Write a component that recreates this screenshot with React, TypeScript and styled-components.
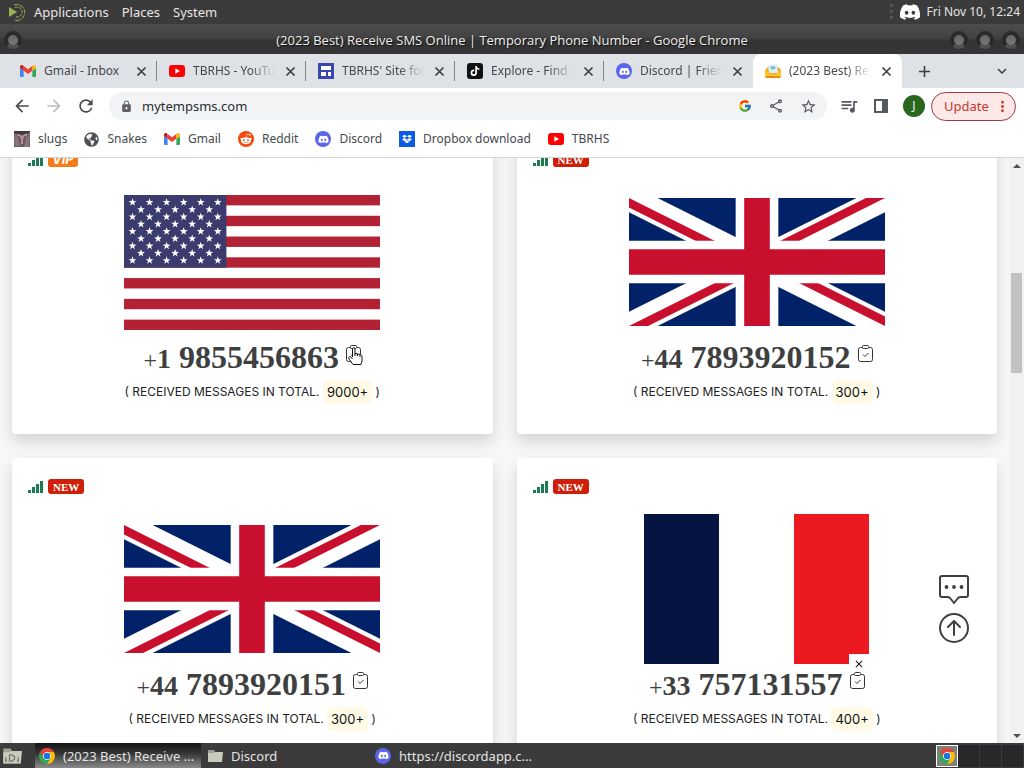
import React, { useId } from "react";
import styled, { createGlobalStyle, css } from "styled-components";
import {
  MdAdd, MdArrowBack, MdArrowForward, MdClose, MdExpandMore, MdLock, MdMoreVert,
  MdOutlineShare, MdQueueMusic, MdRefresh, MdStarBorder,
} from "react-icons/md";
import { FaDiscord, FaDropbox, FaGlobeAmericas, FaRedditAlien, FaTiktok } from "react-icons/fa";
import { FcGoogle } from "react-icons/fc";

const Global = createGlobalStyle`
  *, *::before, *::after { box-sizing: border-box; }
  body { margin: 0; background: #f8f8f8; }
  body, button, input { font-family: "Noto Sans", "Open Sans", sans-serif; font-size: 13px; }
  button { border: 0; padding: 0; background: none; color: inherit; }
  a { color: inherit; text-decoration: none; }
  svg { display: block; flex: none; }
`;

const Desktop = styled.div`
  display: flex;
  flex-direction: column;
  height: 100vh;
  overflow: hidden;
`;

/* ---------- desktop panel and window title ---------- */

const TopPanel = styled.header`
  display: flex;
  align-items: center;
  justify-content: space-between;
  height: 24px;
  padding: 0 4px 0 8px;
  background: #3c3b3c;
  color: #e6e6e4;
`;

const PanelGroup = styled.div<{ $gap: number }>`
  display: flex;
  align-items: center;
  gap: ${(p) => p.$gap}px;
`;

const MenuButton = styled.button`
  display: flex;
  align-items: center;
  gap: 7px;
  line-height: 24px;
`;

const Grip = styled.span`
  width: 3px;
  height: 16px;
  background: repeating-linear-gradient(#565556 0 3px, transparent 3px 6px);
`;

const Clock = styled.time`
  font-size: 12px;
  line-height: 24px;
`;

const TitleBar = styled.div`
  display: grid;
  grid-template-columns: 96px 1fr 96px;
  align-items: center;
  height: 30px;
  padding: 2px 4px 0;
  background: linear-gradient(#4c4c4c, #444 40%, #333 60%, #363636);
  color: #eee;
`;

const WindowTitle = styled.h1`
  margin: 0;
  font-family: "Open Sans", "Noto Sans", sans-serif;
  font-size: 13px;
  font-weight: 500;
  line-height: 28px;
  text-align: center;
  white-space: nowrap;
  text-shadow: 1px 1px 1px #111;
`;

const WindowButtons = styled.div<{ $end?: boolean }>`
  display: flex;
  gap: 8px;
  justify-content: ${(p) => (p.$end ? "flex-end" : "flex-start")};
`;

const WindowButton = styled.button`
  width: 18px;
  height: 18px;
  border: 4px solid #2a2a2a;
  border-bottom-color: #505050;
  border-radius: 50%;
  background: linear-gradient(#666, #777);
`;

/* ---------- browser chrome ---------- */

const TabStrip = styled.div`
  display: flex;
  align-items: stretch;
  height: 34px;
  padding: 0 8px;
  background: #dee1e6;
  color: #45494d;
`;

const Tab = styled.div<{ $active?: boolean; $divider?: boolean }>`
  display: flex;
  align-items: center;
  width: 149px;
  padding: 0 8px 0 12px;
  ${(p) =>
    p.$active &&
    css`
      background: #fff;
      border-radius: 8px 8px 0 0;
    `}
  ${(p) =>
    p.$divider &&
    css`
      background: linear-gradient(#808387, #808387) right 7px / 1px 20px no-repeat;
    `}
`;

const TabLabel = styled.span<{ $fade: boolean }>`
  flex: 1;
  min-width: 0;
  margin: 0 8px;
  overflow: hidden;
  font-size: 12px;
  white-space: nowrap;
  line-height: 20px;
  ${(p) => p.$fade && "mask-image: linear-gradient(to right, #000 70%, transparent);"}
`;

const IconButton = styled.button<{ $color?: string }>`
  display: flex;
  align-items: center;
  justify-content: center;
  color: ${(p) => p.$color ?? "#3c4043"};
`;

const NewTab = styled(IconButton)`
  width: 44px;
`;

const TabMenu = styled(IconButton)`
  margin-left: auto;
  width: 28px;
`;

const Toolbar = styled.div`
  display: flex;
  align-items: center;
  height: 36px;
  padding: 0 8px 0 12px;
  background: #fff;
`;

const NavButtons = styled.div`
  display: flex;
  gap: 12px;
  margin-right: 13px;
`;

const AddressBar = styled.label`
  display: flex;
  flex: 1;
  align-items: center;
  gap: 16px;
  height: 28px;
  padding: 0 10px 0 11px;
  border-radius: 14px;
  background: #f1f3f4;
  color: #5f6368;
`;

const AddressInput = styled.input`
  flex: 1;
  min-width: 0;
  margin-left: -7px;
  padding: 0;
  border: 0;
  outline: 0;
  background: none;
  color: #2b2d30;
  line-height: 20px;
`;

const ToolbarActions = styled.div`
  display: flex;
  align-items: center;
  gap: 15px;
  margin: 0 6px 0 12px;
`;

const Avatar = styled.button`
  width: 22px;
  height: 22px;
  border-radius: 50%;
  background: #2a661e;
  color: #e8f2e6;
  font-size: 12px;
  line-height: 22px;
`;

const UpdateButton = styled.button`
  display: flex;
  align-items: center;
  justify-content: space-between;
  width: 85px;
  height: 29px;
  padding: 0 4px 0 12px;
  border: 1px solid #9c3b48;
  border-radius: 15px;
  background: #fce8e6;
  color: #c5372f;
`;

const Bookmarks = styled.nav`
  display: flex;
  align-items: center;
  gap: 17px;
  height: 34px;
  padding: 0 14px 3px;
  border-bottom: 1px solid #d4d4d4;
  background: #fff;
  color: #45494d;
`;

const Bookmark = styled.a`
  display: flex;
  align-items: center;
  gap: 8px;
  font-size: 12px;
  line-height: 20px;
  white-space: nowrap;
`;

const Tile = styled.span<{ $bg: string; $round?: string }>`
  display: flex;
  flex: none;
  align-items: center;
  justify-content: center;
  width: 16px;
  height: 16px;
  border-radius: ${(p) => p.$round ?? "0"};
  background: ${(p) => p.$bg};
  color: #fff;
`;

/* ---------- page ---------- */

const PageArea = styled.div`
  position: relative;
  display: flex;
  flex: 1;
  min-height: 0;
`;

const Viewport = styled.main`
  flex: 1;
  min-width: 0;
  overflow: hidden;
`;

const CardGrid = styled.div`
  display: grid;
  grid-template-columns: 1fr 1fr;
  gap: 24px;
  margin-top: -27px;
  padding: 0 12px;
`;

const Card = styled.article`
  display: flex;
  flex-direction: column;
  align-items: center;
  height: 303px;
  padding: 20px 16px 0;
  border-radius: 4px;
  background: #fff;
  box-shadow: 0 8px 16px rgba(0, 0, 0, 0.15);
  color: #3e3f40;
`;

const BadgeRow = styled.div`
  display: flex;
  align-items: center;
  align-self: stretch;
  gap: 4px;
  height: 17px;
`;

const Badge = styled.span<{ $vip?: boolean }>`
  height: 15px;
  padding: 0 ${(p) => (p.$vip ? 4 : 5)}px;
  border-radius: 3px;
  background: ${(p) => (p.$vip ? "#f77a1b" : "#cf1f08")};
  color: #fff;
  font-family: ${(p) => (p.$vip ? '"Inter", sans-serif' : '"Liberation Serif", serif')};
  font-size: ${(p) => (p.$vip ? 13 : 11)}px;
  font-style: ${(p) => (p.$vip ? "italic" : "normal")};
  font-weight: 700;
  line-height: ${(p) => (p.$vip ? 14 : 16)}px;
`;

const FlagBox = styled.div`
  display: flex;
  align-items: center;
  height: 150px;
  margin-top: 19px;
`;

const Phone = styled.h2`
  display: flex;
  align-items: baseline;
  margin: 0;
  font-family: "Liberation Serif", serif;
  font-size: 32px;
  font-weight: 700;
  line-height: 40px;
  white-space: nowrap;
`;

const Prefix = styled.span`
  margin-right: 8px;
  font-size: 28px;
`;

const Plus = styled.span`
  font-size: 24px;
  font-weight: 400;
`;

const CopyButton = styled.button`
  position: relative;
  align-self: flex-start;
  margin: 8px 0 0 7px;
  color: #333;
`;

const Pointer = styled.svg`
  position: absolute;
  left: 2px;
  top: 2px;
`;

const Total = styled.p`
  display: flex;
  align-items: center;
  margin: 0;
  color: #222;
  font-family: "Inter", "Lato", sans-serif;
  font-size: 12px;
  line-height: 24px;
  white-space: pre;
`;

const Count = styled.span`
  padding: 0 4px;
  border-radius: 6px;
  background: #fefae6;
  color: #111;
  font-size: 13px;
`;

const Floating = styled.div`
  position: absolute;
  right: 55px;
  bottom: 100px;
  display: flex;
  flex-direction: column;
  gap: 8px;
  color: #333638;
`;

const AdClose = styled.button`
  position: absolute;
  right: 155px;
  bottom: 69px;
  display: flex;
  align-items: center;
  justify-content: center;
  width: 20px;
  height: 20px;
  background: linear-gradient(#fff, #fff) top / 100% 11px no-repeat;
  color: #111;
`;

const Scrollbar = styled.div`
  display: flex;
  flex-direction: column;
  align-items: center;
  width: 15px;
  padding: 6px 0 5px;
  background: #f1f1f1;
`;

const Thumb = styled.div`
  width: 11px;
  height: 17.5%;
  margin: 105px 0 auto;
  background: #c1c1c1;
`;

const Arrow = styled.span<{ $down?: boolean }>`
  border: 4px solid transparent;
  ${(p) => (p.$down ? "border-top-color: #505050; border-bottom: 0;" : "border-bottom-color: #505050; border-top: 0;")}
`;

/* ---------- taskbar ---------- */

const Taskbar = styled.footer`
  display: flex;
  align-items: center;
  height: 25px;
  padding-left: 2px;
  background: #3c3b3c;
  color: #e4e4e2;
`;

const Tasks = styled.div`
  display: flex;
  gap: 2px;
  margin-left: 13px;
`;

const Task = styled.button<{ $active?: boolean }>`
  display: flex;
  align-items: center;
  gap: 8px;
  width: 166px;
  height: 25px;
  padding: 0 4px;
  line-height: 24px;
  white-space: nowrap;
  ${(p) =>
    p.$active &&
    css`
      background: linear-gradient(#151516, #333 40%, #8a8a8b);
    `}
`;

const Workspaces = styled.div`
  display: flex;
  margin-left: auto;
`;

const Workspace = styled.button<{ $current?: boolean }>`
  display: flex;
  align-items: center;
  justify-content: center;
  width: 22px;
  height: 22px;
  border: ${(p) => (p.$current ? "1px solid #fff" : "0")};
  border-right: 1px solid ${(p) => (p.$current ? "#fff" : "#3a3a3c")};
  background: ${(p) => (p.$current ? "#7d827b" : "#28282a")};
`;

/* ---------- drawings ---------- */

const GmailIcon = () => (
  <svg width="16" height="16" viewBox="52 31 88 88" aria-hidden="true">
    <path fill="#4285f4" d="M58 108h14V74L52 59v43c0 3.32 2.69 6 6 6" />
    <path fill="#34a853" d="M120 108h14c3.32 0 6-2.69 6-6V59l-20 15" />
    <path fill="#fbbc04" d="M120 48v26l20-15v-8c0-7.42-8.47-11.65-14.4-7.2" />
    <path fill="#ea4335" d="M72 74V48l24 18 24-18v26L96 92" />
    <path fill="#c5221f" d="M52 51v8l20 15V48l-5.6-4.2c-5.94-4.45-14.4-.22-14.4 7.2" />
  </svg>
);

const ChromeIcon = () => (
  <svg width="16" height="16" viewBox="2 2 44 44" aria-hidden="true">
    <circle cx="24" cy="24" r="12" fill="#fff" />
    <path fill="#ea4335" d="M4.95 13A22 22 0 0 1 43.05 13H24A11 11 0 0 0 14.47 29.5Z" />
    <path fill="#fbbc04" d="M43.05 13A22 22 0 0 1 24 46L33.53 29.5A11 11 0 0 0 24 13Z" />
    <path fill="#34a853" d="M24 46A22 22 0 0 1 4.95 13L14.47 29.5A11 11 0 0 0 33.53 29.5Z" />
    <circle cx="24" cy="24" r="9" fill="#1a73e8" />
  </svg>
);

const CrossIcon = () => (
  <svg width="15" height="15" viewBox="0 0 15 15" aria-hidden="true">
    <path stroke="currentColor" strokeWidth="1.700" d="M3.500 3.500l8 8M11.500 3.500l-8 8" />
  </svg>
);

const YouTubeIcon = () => (
  <svg width="16" height="16" viewBox="0 0 16 16" aria-hidden="true">
    <rect y="2" width="16" height="12" rx="3" fill="#f00" />
    <path fill="#fff" d="M6.300 5.200v5.600L11 8z" />
  </svg>
);

const DiscordIcon = () => (
  <Tile $bg="#5b65ea" $round="50%"><FaDiscord size={11} /></Tile>
);

const SitesIcon = () => (
  <svg width="16" height="16" viewBox="0 0 16 16" aria-hidden="true">
    <path fill="#3949ab" d="M0 0h16v16H0z" />
    <path fill="#fff" d="M3 3h10v4H3zM3 9h5v4H3zM10 9h3v4h-3z" />
  </svg>
);

const MailboxIcon = () => (
  <svg width="16" height="16" viewBox="0 0 16 16" aria-hidden="true">
    <path fill="#f5a91c" d="M0 7l3-3h10l3 3v8H0z" />
    <path fill="#dff1f8" d="M3 2l9-1 1 9H4z" />
    <path fill="#74b9d5" d="M5 4l4-1 2 2-4 2z" />
    <path fill="#fec52e" d="M0 7l5 4h6l5-4v7a1 1 0 0 1-1 1H1a1 1 0 0 1-1-1z" />
    <path fill="#f28a12" d="M1 13h14v2H1z" />
  </svg>
);

const SlugIcon = () => (
  <svg width="16" height="16" viewBox="0 0 16 16" aria-hidden="true">
    <path fill="#6b5b60" d="M0 0h16v16H0z" />
    <path fill="#8b747b" d="M0 3l4 3 2 9H1zM16 2l-4 5-2 9h5z" />
    <path fill="none" stroke="#b8939d" strokeWidth="2" d="M3 4c3-1 4 1 5 4 1-3 2-5 5-4M8 8v5" />
    <path fill="#453a3f" d="M0 0h16v1L8 4 0 2z" />
  </svg>
);

const MateLogo = () => (
  <svg width="19" height="18" viewBox="0 0 19 18" aria-hidden="true">
    <path fill="#98b351" d="M1 4l8 5-8 5z" />
    <g fill="none" stroke="#98b351">
      <path d="M6 2a8 8 0 1 1 0 15" strokeDasharray="5 1" />
      <path d="M7 4.500a5 5 0 1 1 0 9" strokeDasharray="3 1" />
    </g>
  </svg>
);

const SidePanelIcon = () => (
  <svg width="14" height="14" viewBox="0 0 14 14" aria-hidden="true">
    <path fill="none" stroke="#55595e" strokeWidth="2" d="M1 1h12v12H1z" />
    <path fill="#55595e" d="M8 1h5v12H8z" />
  </svg>
);

const FolderIcon = ({ size = 16 }: { size?: number }) => (
  <svg width={size} height={size} viewBox="0 0 16 16" aria-hidden="true">
    <path fill="#9fa194" d="M1 2h6l1 2h7v10H1z" />
    <path fill="#c9cabc" d="M1 5h5l2-1h8l-1 10H1z" />
    {size > 16 && <path fill="none" stroke="#74766c" d="M6 7h2l2 1.500v2L8 12H6zM3 9v3h1M13 9v3h-1" />}
  </svg>
);

const Signal = () => (
  <svg width="16" height="12" viewBox="0 0 16 12" aria-hidden="true">
    <path fill="#1d7a52" d="M0 9h3v3H0zM4 6h3v6H4zM8 3h3v9H8zM12 0h3v12h-3z" />
  </svg>
);

const ClipboardIcon = () => (
  <svg width="15" height="17" viewBox="0 0 15 17" fill="none" stroke="currentColor" aria-hidden="true">
    <path d="M4 2.500H2.500a2 2 0 0 0-2 2v10a2 2 0 0 0 2 2h10a2 2 0 0 0 2-2v-10a2 2 0 0 0-2-2H11" />
    <rect x="4.500" y=".5" width="6" height="3" rx="1" />
    <path d="M5 9.500l2 2 3.500-3.500" />
  </svg>
);

const HandPointer = () => (
  <Pointer width="15" height="18" viewBox="0 0 15 18" aria-hidden="true">
    <path
      fill="#fff"
      stroke="#111"
      d="M4.500 10V2a1.200 1.200 0 0 1 2.500 0v4.500l5.500 1q1.500.5 1.500 2V14l-1 3.500H5L1 12q-1-2 .5-2.500 1.500 0 3 2.500"
    />
    <path stroke="#111" d="M7 6v3M9.500 7v2M12 8v2" />
  </Pointer>
);

const ChatIcon = () => (
  <svg width="30" height="30" viewBox="0 0 30 30" fill="none" stroke="currentColor" strokeWidth="2" aria-hidden="true">
    <path strokeLinejoin="round" d="M3 1h24a2 2 0 0 1 2 2v17a2 2 0 0 1-2 2h-5q-2 0-3 1l-4 5-4-5q-1-1-3-1H3a2 2 0 0 1-2-2V3a2 2 0 0 1 2-2z" />
    <g fill="currentColor" stroke="none">
      <circle cx="7.500" cy="12" r="1.900" />
      <circle cx="15" cy="12" r="1.900" />
      <circle cx="22.500" cy="12" r="1.900" />
    </g>
  </svg>
);

const UpIcon = () => (
  <svg width="30" height="30" viewBox="0 0 30 30" fill="none" stroke="currentColor" strokeWidth="2" strokeLinecap="round" strokeLinejoin="round" aria-hidden="true">
    <circle cx="15" cy="15" r="14" />
    <path d="M15 22V8M9 14l6-6 6 6" />
  </svg>
);

const starPoints = (cx: number, cy: number, r: number) =>
  Array.from({ length: 10 }, (_, i) => {
    const radius = i % 2 ? r * 0.4 : r;
    const angle = (Math.PI / 5) * i - Math.PI / 2;
    return `${(cx + radius * Math.cos(angle)).toFixed(2)},${(cy + radius * Math.sin(angle)).toFixed(2)}`;
  }).join(" ");

const FlagUS = () => (
  <svg width="256" height="135" viewBox="0 0 256 135" role="img" aria-label="United States" preserveAspectRatio="none">
    <path fill="#fff" d="M0 0h256v135H0z" />
    {Array.from({ length: 7 }, (_, i) => (
      <rect key={i} y={(i * 2 * 135) / 13} width="256" height={135 / 13} fill="#b22234" />
    ))}
    <rect width="102.4" height="72.7" fill="#3c3b6e" />
    {Array.from({ length: 9 }, (_, row) =>
      Array.from({ length: row % 2 ? 5 : 6 }, (_, col) => (
        <polygon
          key={`${row}-${col}`}
          fill="#fff"
          points={starPoints(8.5 + (row % 2 ? 8.5 : 0) + col * 17.06, 7.3 + row * 7.27, 4.1)}
        />
      ))
    )}
  </svg>
);

const FlagUK = () => {
  const clip = useId();
  return (
    <svg width="256" height="128" viewBox="0 0 60 30" role="img" aria-label="United Kingdom">
      <clipPath id={clip}>
        <path d="M30 15h30v15zv15h-30zh-30v-15zv-15h30z" />
      </clipPath>
      <path fill="#012169" d="M0 0h60v30H0z" />
      <path stroke="#fff" strokeWidth="6" d="M0 0l60 30m0-30L0 30" />
      <path stroke="#c8102e" strokeWidth="4" clipPath={`url(#${clip})`} d="M0 0l60 30m0-30L0 30" />
      <path stroke="#fff" strokeWidth="10" d="M30 0v30M0 15h60" />
      <path stroke="#c8102e" strokeWidth="6" d="M30 0v30M0 15h60" />
    </svg>
  );
};

const FlagFR = () => (
  <svg width="225" height="150" viewBox="0 0 3 2" role="img" aria-label="France">
    <path fill="#051440" d="M0 0h1v2H0z" />
    <path fill="#fff" d="M1 0h1v2H1z" />
    <path fill="#ec1920" d="M2 0h1v2H2z" />
  </svg>
);

/* ---------- data ---------- */

const tabs = [
  { icon: <GmailIcon />, label: "Gmail - Inbox" },
  { icon: <YouTubeIcon />, label: "TBRHS - YouTube" },
  { icon: <SitesIcon />, label: "TBRHS' Site for S" },
  { icon: <Tile $bg="#111" $round="3px"><FaTiktok size={10} /></Tile>, label: "Explore - Find y" },
  { icon: <DiscordIcon />, label: "Discord | Friends" },
  { icon: <MailboxIcon />, label: "(2023 Best) Rec" },
];

const bookmarks = [
  { icon: <SlugIcon />, label: "slugs" },
  { icon: <FaGlobeAmericas size={15} color="#4d5156" />, label: "Snakes" },
  { icon: <GmailIcon />, label: "Gmail" },
  { icon: <Tile $bg="#f4480f" $round="50%"><FaRedditAlien size={12} /></Tile>, label: "Reddit" },
  { icon: <DiscordIcon />, label: "Discord" },
  { icon: <Tile $bg="#0b5be8"><FaDropbox size={10} /></Tile>, label: "Dropbox download" },
  { icon: <YouTubeIcon />, label: "TBRHS" },
];

const numbers = [
  { badge: "VIP", flag: <FlagUS />, code: "1", number: "9855456863", total: "9000+", hover: true },
  { badge: "NEW", flag: <FlagUK />, code: "44", number: "7893920152", total: "300+" },
  { badge: "NEW", flag: <FlagUK />, code: "44", number: "7893920151", total: "300+" },
  { badge: "NEW", flag: <FlagFR />, code: "33", number: "757131557", total: "400+" },
];

export default function App() {
  return (
    <Desktop>
      <Global />
      <TopPanel>
        <PanelGroup $gap={13}>
          <MenuButton><MateLogo />Applications</MenuButton>
          <MenuButton>Places</MenuButton>
          <MenuButton>System</MenuButton>
        </PanelGroup>
        <PanelGroup $gap={6}>
          <Grip />
          <FaDiscord size={22} color="#fff" />
          <Clock>Fri Nov 10, 12:24</Clock>
        </PanelGroup>
      </TopPanel>

      <TitleBar>
        <WindowButtons><WindowButton aria-label="Window menu" /></WindowButtons>
        <WindowTitle>(2023 Best) Receive SMS Online | Temporary Phone Number - Google Chrome</WindowTitle>
        <WindowButtons $end>
          <WindowButton aria-label="Minimize" />
          <WindowButton aria-label="Maximize" />
          <WindowButton aria-label="Close" />
        </WindowButtons>
      </TitleBar>

      <TabStrip>
        {tabs.map((tab, i) => (
          <Tab key={tab.label} $active={i === 5} $divider={i < 4}>
            {tab.icon}
            <TabLabel $fade={i > 0}>{tab.label}</TabLabel>
            <IconButton aria-label="Close tab"><CrossIcon /></IconButton>
          </Tab>
        ))}
        <NewTab aria-label="New tab"><MdAdd size={19} /></NewTab>
        <TabMenu aria-label="Search tabs"><MdExpandMore size={18} /></TabMenu>
      </TabStrip>

      <Toolbar>
        <NavButtons>
          <IconButton aria-label="Back" $color="#4a4d51"><MdArrowBack size={20} /></IconButton>
          <IconButton aria-label="Forward" $color="#bbbdc0"><MdArrowForward size={20} /></IconButton>
          <IconButton aria-label="Reload" $color="#4a4d51"><MdRefresh size={20} /></IconButton>
        </NavButtons>
        <AddressBar>
          <MdLock size={13} />
          <AddressInput aria-label="Address" defaultValue="mytempsms.com" />
          <FcGoogle size={14} />
          <IconButton aria-label="Share" type="button"><MdOutlineShare size={16} color="#55595e" /></IconButton>
          <IconButton aria-label="Bookmark this page" type="button"><MdStarBorder size={17} color="#55595e" /></IconButton>
        </AddressBar>
        <ToolbarActions>
          <IconButton aria-label="Media" $color="#55595e"><MdQueueMusic size={20} /></IconButton>
          <IconButton aria-label="Side panel"><SidePanelIcon /></IconButton>
          <Avatar>J</Avatar>
        </ToolbarActions>
        <UpdateButton>Update<MdMoreVert size={17} /></UpdateButton>
      </Toolbar>

      <Bookmarks aria-label="Bookmarks">
        {bookmarks.map((b) => (
          <Bookmark key={b.label} href="#">{b.icon}{b.label}</Bookmark>
        ))}
      </Bookmarks>

      <PageArea>
        <Viewport>
          <CardGrid>
            {numbers.map((n) => (
              <Card key={n.number}>
                <BadgeRow><Signal /><Badge $vip={n.badge === "VIP"}>{n.badge}</Badge></BadgeRow>
                <FlagBox>{n.flag}</FlagBox>
                <Phone>
                  <Prefix><Plus>+</Plus>{n.code}</Prefix>
                  {n.number}
                  <CopyButton aria-label="Copy number"><ClipboardIcon />{n.hover && <HandPointer />}</CopyButton>
                </Phone>
                <Total>( RECEIVED MESSAGES IN TOTAL. <Count>{n.total}</Count> )</Total>
              </Card>
            ))}
          </CardGrid>
        </Viewport>
        <Scrollbar aria-hidden="true"><Arrow /><Thumb /><Arrow $down /></Scrollbar>
        <Floating>
          <IconButton aria-label="Messages"><ChatIcon /></IconButton>
          <IconButton aria-label="Back to top"><UpIcon /></IconButton>
        </Floating>
        <AdClose aria-label="Close ad"><MdClose size={12} /></AdClose>
      </PageArea>

      <Taskbar>
        <IconButton aria-label="Show desktop"><FolderIcon size={20} /></IconButton>
        <Tasks>
          <Task $active><ChromeIcon />(2023 Best) Receive ...</Task>
          <Task><FolderIcon />Discord</Task>
          <Task><DiscordIcon />https://discordapp.c...</Task>
        </Tasks>
        <Workspaces>
          <Workspace $current aria-label="Workspace 1"><ChromeIcon /></Workspace>
          <Workspace aria-label="Workspace 2" />
          <Workspace aria-label="Workspace 3" />
          <Workspace aria-label="Workspace 4" />
        </Workspaces>
      </Taskbar>
    </Desktop>
  );
}
